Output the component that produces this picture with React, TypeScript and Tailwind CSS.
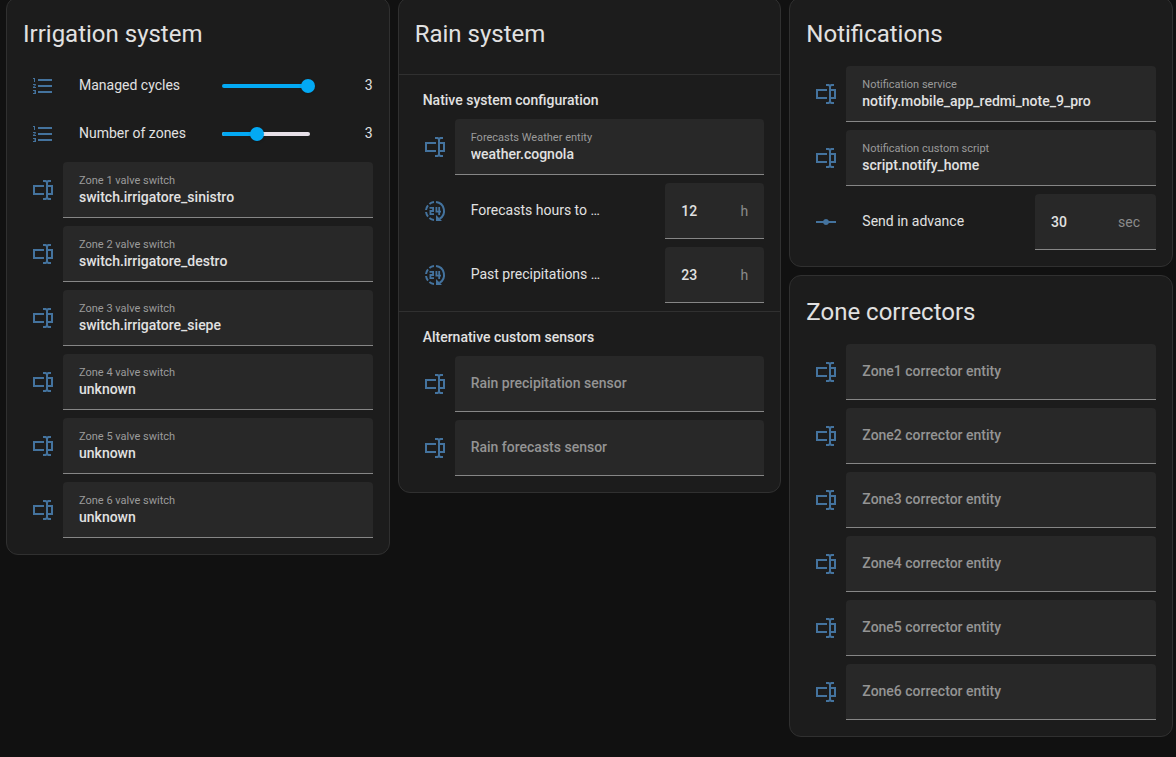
import { useId, useState } from 'react';
import type { ReactNode } from 'react';

const ICONS = {
  textbox:
    'M17,7H22V17H17V19A1,1 0 0,0 18,20H20V22H17.5C16.95,22 16,21.55 16,21C16,21.55 15.05,22 14.5,22H12V20H14A1,1 0 0,0 15,19V5A1,1 0 0,0 14,4H12V2H14.5C15.05,2 16,2.45 16,3C16,2.45 16.95,2 17.5,2H20V4H18A1,1 0 0,0 17,5V7M2,7H13V9H4V15H13V17H2V7M20,15V9H17V15H20Z',
  list: 'M7,13V11H21V13H7M7,19V17H21V19H7M7,7V5H21V7H7M3,8V5H2V4H4V8H3M2,17V16H5V20H2V19H4V18.5H3V17.5H4V17H2M4.25,10A0.75,0.75 0 0,1 5,10.75C5,10.95 4.92,11.14 4.79,11.27L3.12,13H5V14H2V13.08L4,11H2V10H4.25Z',
  vertex:
    'M22,11H14.82C14.4,9.84 13.3,9 12,9C10.7,9 9.6,9.84 9.18,11H2V13H9.18C9.6,14.16 10.7,15 12,15C13.3,15 14.4,14.16 14.82,13H22',
};

type IconName = keyof typeof ICONS | 'hours';

function Icon({ name }: { name: IconName }) {
  return (
    <span className="flex w-10 shrink-0 justify-center text-[#44739e]">
      <svg viewBox="0 0 24 24" className="size-6" fill="currentColor" aria-hidden="true">
        {name === 'hours' ? (
          <g fill="none" stroke="currentColor" strokeWidth="2">
            <path d="M13 3.05A9 9 0 0 1 16.5 19.8" />
            <path d="M13 16v6h6z" fill="currentColor" stroke="none" />
            <path d="M11 3.05A9 9 0 0 0 6.4 5M5 6.4A9 9 0 0 0 3.05 11M3.05 13A9 9 0 0 0 5 17.6M6.4 19A9 9 0 0 0 11 20.95" />
            <path d="M6.5 8.9h3.6v3.1h-2.7v3.1H11M13.4 8v4.7H18M16.2 8v8" strokeWidth="1.8" />
          </g>
        ) : (
          <path d={ICONS[name]} />
        )}
      </svg>
    </span>
  );
}

function Card({ title, children }: { title: string; children: ReactNode }) {
  return (
    <section className="rounded-xl border border-[#303030] bg-[#1c1c1c] pb-4">
      <h2 className="px-4 pt-3 pb-2 text-2xl leading-[48px]">{title}</h2>
      <div className="flex flex-col gap-2">{children}</div>
    </section>
  );
}

function Section({ title }: { title: string }) {
  return (
    <h3 className="border-t border-[#303030] px-6 pt-[15px] pb-px text-sm leading-5 font-medium">
      {title}
    </h3>
  );
}

const box = 'h-14 rounded-t border-b border-[#868686] bg-[#282828] px-4';

function TextField({ label, value = '' }: { label: string; value?: string }) {
  const id = useId();
  const [text, setText] = useState(value);
  return (
    <div className="flex items-center px-4">
      <Icon name="textbox" />
      {value ? (
        <div className={`${box} flex min-w-0 flex-1 flex-col justify-center`}>
          <label htmlFor={id} className="text-[11px] leading-4 text-[#9b9b9b]">
            {label}
          </label>
          <input
            id={id}
            value={text}
            onChange={(e) => setText(e.target.value)}
            className="h-[18px] w-full bg-transparent pb-0.5 text-sm leading-4 font-medium outline-none"
          />
        </div>
      ) : (
        <input
          aria-label={label}
          placeholder={label}
          value={text}
          onChange={(e) => setText(e.target.value)}
          className={`${box} min-w-0 flex-1 pb-0.5 text-sm font-medium outline-none placeholder:text-[#949494]`}
        />
      )}
    </div>
  );
}

function NumberField(props: {
  icon: IconName;
  label: string;
  value: string;
  unit: string;
  width: string;
}) {
  const id = useId();
  const [text, setText] = useState(props.value);
  return (
    <div className="flex items-center px-4">
      <Icon name={props.icon} />
      <label htmlFor={id} className="min-w-0 flex-1 truncate pb-0.5 pl-4 text-sm">
        {props.label}
      </label>
      <div className={`${box} ${props.width} flex items-center`}>
        <input
          id={id}
          inputMode="numeric"
          value={text}
          onChange={(e) => setText(e.target.value)}
          className="w-0 min-w-0 flex-1 bg-transparent text-sm font-medium outline-none"
        />
        <span className="text-sm text-[#8b8b8b]">{props.unit}</span>
      </div>
    </div>
  );
}

function SliderRow({ label, min, max }: { label: string; min: number; max: number }) {
  const id = useId();
  const [value, setValue] = useState(3);
  const percent = ((value - min) / (max - min)) * 100;
  return (
    <div className="flex h-10 items-center px-4">
      <Icon name="list" />
      <label htmlFor={id} className="min-w-0 flex-1 truncate pb-0.5 pl-4 text-sm">
        {label}
      </label>
      <div className="relative flex h-4 w-[99px] items-center">
        <div className="absolute right-[5px] left-1.5 h-1 overflow-hidden rounded-full bg-[#e7e0e8]">
          <div className="h-full bg-[#03a9f4]" style={{ width: `${percent}%` }} />
        </div>
        <input
          id={id}
          type="range"
          min={min}
          max={max}
          value={value}
          onChange={(e) => setValue(Number(e.target.value))}
          className="relative h-4 w-full appearance-none bg-transparent [&::-webkit-slider-thumb]:size-3.5 [&::-webkit-slider-thumb]:appearance-none [&::-webkit-slider-thumb]:rounded-full [&::-webkit-slider-thumb]:bg-[#03a9f4] [&::-webkit-slider-thumb]:shadow"
        />
      </div>
      <output htmlFor={id} className="w-[58px] pb-0.5 text-right text-sm">
        {value}
      </output>
    </div>
  );
}

const switches = [
  'switch.irrigatore_sinistro',
  'switch.irrigatore_destro',
  'switch.irrigatore_siepe',
  'unknown',
  'unknown',
  'unknown',
];

export default function App() {
  return (
    <main className="min-h-screen overflow-hidden bg-[#111111] pr-[3px] pl-1.5 font-[Roboto,sans-serif] text-[#e1e1e1]">
      <div className="-mt-[3px] grid grid-cols-3 items-start gap-2">
        <Card title="Irrigation system">
          <SliderRow label="Managed cycles" min={1} max={3} />
          <SliderRow label="Number of zones" min={1} max={6} />
          {switches.map((value, i) => (
            <TextField key={i} label={`Zone ${i + 1} valve switch`} value={value} />
          ))}
        </Card>

        <Card title="Rain system">
          <div className="mt-2 flex flex-col gap-2">
            <Section title="Native system configuration" />
            <TextField label="Forecasts Weather entity" value="weather.cognola" />
            <NumberField icon="hours" label="Forecasts hours to …" value="12" unit="h" width="w-[99px]" />
            <NumberField icon="hours" label="Past precipitations …" value="23" unit="h" width="w-[99px]" />
          </div>
          <Section title="Alternative custom sensors" />
          <TextField label="Rain precipitation sensor" />
          <TextField label="Rain forecasts sensor" />
        </Card>

        <div className="flex flex-col gap-2">
          <Card title="Notifications">
            <TextField label="Notification service" value="notify.mobile_app_redmi_note_9_pro" />
            <TextField label="Notification custom script" value="script.notify_home" />
            <NumberField icon="vertex" label="Send in advance" value="30" unit="sec" width="w-[121px]" />
          </Card>
          <Card title="Zone correctors">
            {[1, 2, 3, 4, 5, 6].map((n) => (
              <TextField key={n} label={`Zone${n} corrector entity`} />
            ))}
          </Card>
        </div>
      </div>
    </main>
  );
}
